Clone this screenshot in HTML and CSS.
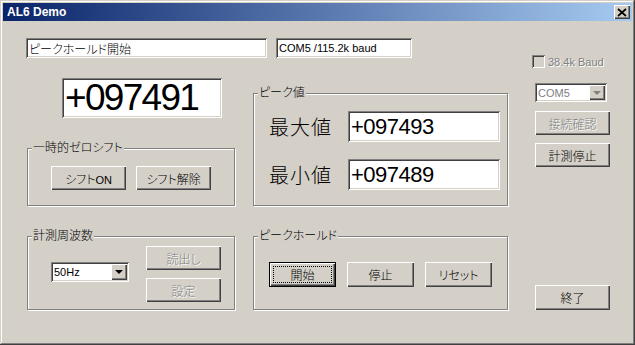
FILE: index.html
```html
<!DOCTYPE html>
<html lang="ja">
<head>
    <meta charset="UTF-8">
    <title>AL6 Demo</title>
    <link rel="stylesheet" href="styles.css">
</head>
<body>
    <div class="window">
        <div class="titlebar">
            <span class="title">AL6 Demo</span>
            <span class="close">
                <svg width="10" height="9" viewBox="0 0 10 9"><path d="M1 1 L9 8 M9 1 L1 8" stroke="#000" stroke-width="1.7" fill="none"/></svg>
            </span>
        </div>
        <div class="client">
            <div class="main">
                <div class="top-row">
                    <div class="field status">ピークホールド開始</div>
                    <div class="field port latin">COM5 /115.2k baud</div>
                </div>
                <div class="panels">
                    <div class="col-left">
                        <div class="field display">+097491</div>
                        <fieldset class="group shift">
                            <legend>一時的ゼロシフト</legend>
                            <div class="btn-row">
                                <button class="btn">シフト<span class="en">ON</span></button>
                                <button class="btn">シフト解除</button>
                            </div>
                        </fieldset>
                        <fieldset class="group freq">
                            <legend>計測周波数</legend>
                            <div class="freq-body">
                                <div class="combo freq-combo">
                                    <span class="combo-text latin">50Hz</span>
                                    <span class="combo-arrow"><span class="tri"></span></span>
                                </div>
                                <div class="btn-stack">
                                    <button class="btn" disabled>読出し</button>
                                    <button class="btn" disabled>設定</button>
                                </div>
                            </div>
                        </fieldset>
                    </div>
                    <div class="col-mid">
                        <fieldset class="group peak">
                            <legend>ピーク値</legend>
                            <div class="peak-row">
                                <span class="peak-label">最大値</span>
                                <div class="field peak-value">+097493</div>
                            </div>
                            <div class="peak-row">
                                <span class="peak-label">最小値</span>
                                <div class="field peak-value">+097489</div>
                            </div>
                        </fieldset>
                        <fieldset class="group hold">
                            <legend>ピークホールド</legend>
                            <div class="hold-row">
                                <button class="btn btn-default">開始</button>
                                <button class="btn">停止</button>
                                <button class="btn">リセット</button>
                            </div>
                        </fieldset>
                    </div>
                </div>
            </div>
            <div class="side">
                <label class="check latin"><span class="check-box"></span>38.4k Baud</label>
                <div class="combo port-combo disabled">
                    <span class="combo-text latin">COM5</span>
                    <span class="combo-arrow"><span class="tri"></span></span>
                </div>
                <button class="btn side-btn first" disabled>接続確認</button>
                <button class="btn side-btn">計測停止</button>
                <button class="btn side-btn exit">終了</button>
            </div>
        </div>
    </div>
</body>
</html>
```
FILE: styles.css
```css
body {
    margin: 0;
    background-color: #d4d0c8;
    font-family: "Liberation Sans", "Noto Sans CJK JP", sans-serif;
    font-size: 12px;
    font-weight: 300;
    font-feature-settings: "palt";
    color: #000;
}
.window {
    width: 635px;
    height: 345px;
    box-sizing: border-box;
    padding: 3px;
    display: flex;
    flex-direction: column;
    background-color: #d4d0c8;
    box-shadow: inset -1px -1px #404040, inset 1px 1px #d4d0c8, inset -2px -2px #808080, inset 2px 2px #fff;
}
.titlebar {
    height: 18px;
    display: flex;
    align-items: center;
    justify-content: space-between;
    padding: 0 2px 0 4px;
    background: linear-gradient(to right, #0a246a, #a6caf0);
}
.title {
    color: #fff;
    font-weight: bold;
    font-size: 12px;
}
.close {
    width: 16px;
    height: 14px;
    display: flex;
    align-items: center;
    justify-content: center;
    background-color: #d4d0c8;
    box-shadow: inset 1px 1px #fff, inset -1px -1px #404040, inset -2px -2px #808080;
}
.client {
    display: flex;
    padding: 17px 0 0 23px;
}
.main {
    width: 482px;
    display: flex;
    flex-direction: column;
}
.latin {
    font-size: 11px;
}
.en {
    font-size: 11px;
}
.field {
    box-sizing: border-box;
    display: flex;
    align-items: center;
    background-color: #fff;
    box-shadow: inset 1px 1px #808080, inset -1px -1px #fff, inset 2px 2px #404040, inset -2px -2px #d4d0c8;
    padding-left: 3px;
    white-space: nowrap;
}
.top-row {
    display: flex;
    gap: 9px;
    height: 20px;
}
.status {
    width: 241px;
}
.port {
    width: 136px;
}
.panels {
    display: flex;
    margin-top: 20px;
}
.col-left {
    width: 210px;
    display: flex;
    flex-direction: column;
}
.display {
    margin-left: 36px;
    width: 160px;
    height: 40px;
    font-size: 37px;
    font-weight: normal;
    letter-spacing: -1.7px;
    padding-left: 3px;
}
.col-mid {
    margin-left: 16px;
    width: 256px;
    display: flex;
    flex-direction: column;
}
.group {
    margin: 0 0 0 1px;
    padding: 0;
    min-width: 0;
    box-sizing: border-box;
    border: 1px solid #808080;
    box-shadow: inset 1px 1px #fff, 1px 1px #fff;
}
.group legend {
    margin-left: 4px;
    padding: 0 1px;
    line-height: 12px;
    background-color: #d4d0c8;
}
.shift {
    width: 208px;
    height: 64px;
    margin-top: 24px;
}
.freq {
    width: 208px;
    height: 80px;
    margin-top: 24px;
}
.peak {
    width: 255px;
    height: 119px;
    margin-top: 9px;
}
.hold {
    width: 255px;
    height: 80px;
    margin-top: 24px;
}
.btn {
    width: 75px;
    height: 24px;
    padding: 0;
    border: none;
    background-color: #d4d0c8;
    font: inherit;
    color: #000;
    box-shadow: inset 1px 1px #fff, inset -1px -1px #404040, inset -2px -2px #808080;
}
.btn:disabled {
    color: #808080;
    text-shadow: 1px 1px #fff;
}
.btn-default {
    box-shadow: inset 0 0 0 1px #000, inset 2px 2px #fff, inset -2px -2px #404040, inset -3px -3px #808080;
    outline: 1px dotted #000;
    outline-offset: -5px;
}
.btn-row {
    display: flex;
    gap: 10px;
    padding: 12px 0 0 23px;
}
.freq-body {
    display: flex;
    gap: 17px;
    padding: 4px 0 0 23px;
}
.btn-stack {
    display: flex;
    flex-direction: column;
    gap: 8px;
}
.combo {
    box-sizing: border-box;
    display: flex;
    padding: 2px;
    background-color: #fff;
    box-shadow: inset 1px 1px #808080, inset -1px -1px #fff, inset 2px 2px #404040, inset -2px -2px #d4d0c8;
}
.combo-text {
    flex: 1;
    display: flex;
    align-items: center;
    padding-left: 1px;
}
.combo-arrow {
    width: 16px;
    display: flex;
    align-items: center;
    justify-content: center;
    background-color: #d4d0c8;
    box-shadow: inset 1px 1px #fff, inset -1px -1px #404040, inset -2px -2px #808080;
}
.tri {
    width: 0;
    height: 0;
    border-left: 4px solid transparent;
    border-right: 4px solid transparent;
    border-top: 4px solid #000;
}
.freq-combo {
    width: 78px;
    height: 20px;
    margin-top: 16px;
}
.peak-row {
    display: flex;
    align-items: center;
    height: 31px;
    padding-left: 15px;
}
.peak-row:first-of-type {
    margin-top: 12px;
}
.peak-row + .peak-row {
    margin-top: 17px;
}
.peak-label {
    width: 79px;
    font-size: 20px;
    font-weight: 200;
    letter-spacing: 1px;
    font-feature-settings: normal;
}
.peak-value {
    width: 152px;
    height: 31px;
    font-size: 22px;
    font-weight: normal;
    letter-spacing: -0.5px;
    padding-left: 3px;
}
.hold-row {
    display: flex;
    gap: 11px;
    padding: 20px 0 0 15px;
}
.hold-row .btn {
    width: 67px;
    height: 25px;
}
.side {
    width: 78px;
    margin-left: 24px;
    display: flex;
    flex-direction: column;
}
.check {
    display: flex;
    align-items: center;
    gap: 3px;
    height: 13px;
    margin-top: 17px;
    color: #808080;
    text-shadow: 1px 1px #fff;
}
.check-box {
    width: 13px;
    height: 13px;
    box-sizing: border-box;
    background-color: #d4d0c8;
    box-shadow: inset 1px 1px #808080, inset -1px -1px #fff, inset 2px 2px #404040, inset -2px -2px #d4d0c8;
}
.port-combo {
    width: 72px;
    height: 19px;
    margin: 15px 0 0 3px;
}
.port-combo.disabled {
    color: #808080;
}
.port-combo .tri {
    border-top-color: #808080;
}
.side-btn {
    margin-left: 3px;
    margin-top: 8px;
}
.side-btn.first {
    margin-top: 9px;
}
.side-btn.exit {
    margin-top: auto;
    height: 25px;
}
```
